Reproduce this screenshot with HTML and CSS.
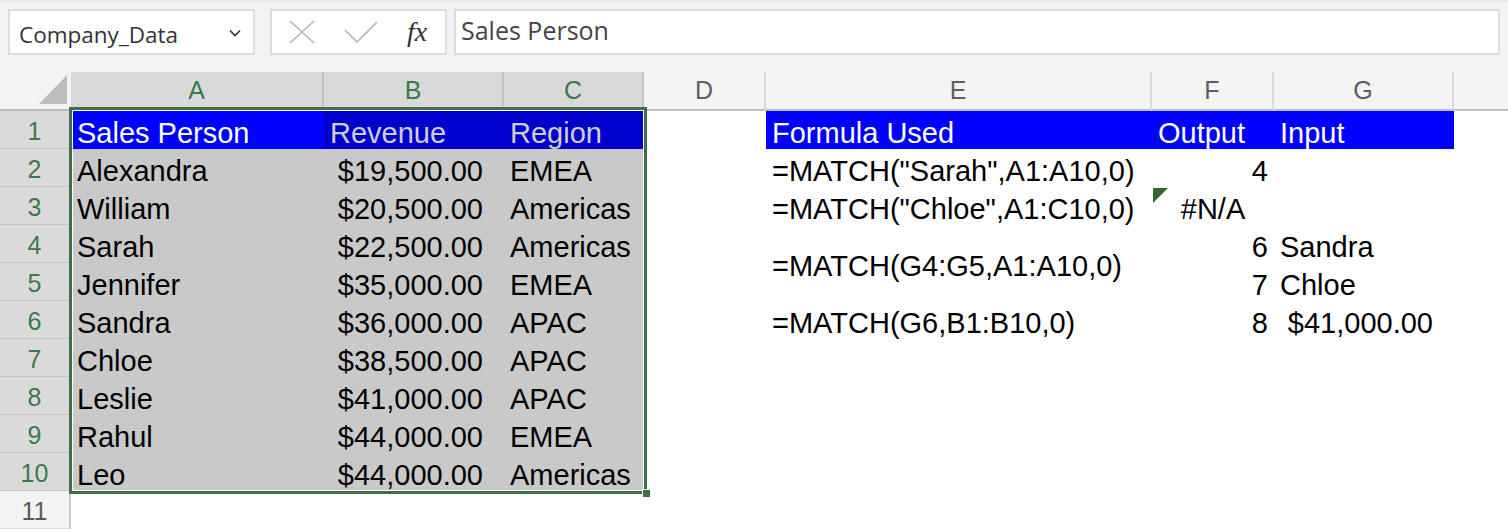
FILE: index.html
```html
<!DOCTYPE html>
<html lang="en">

<head>
    <meta charset="UTF-8">
    <title>Company_Data | MATCH examples</title>
    <link rel="stylesheet" href="styles.css">
</head>

<body>

    <!-- Name box + formula bar -->
    <div class="toolbar">
        <div class="name-box">
            <span>Company_Data</span>
            <svg class="chevron" width="12" height="8" viewBox="0 0 12 8">
                <polyline points="1,1.5 6,6.5 11,1.5" fill="none" stroke="#333" stroke-width="1.6" />
            </svg>
        </div>
        <div class="fx-buttons">
            <svg width="26" height="24" viewBox="0 0 26 24">
                <line x1="1" y1="1" x2="25" y2="23" stroke="#b4b4b4" stroke-width="1.6" />
                <line x1="25" y1="1" x2="1" y2="23" stroke="#b4b4b4" stroke-width="1.6" />
            </svg>
            <svg width="34" height="22" viewBox="0 0 34 22">
                <polyline points="1,9 13,21 33,1" fill="none" stroke="#b4b4b4" stroke-width="1.6" />
            </svg>
            <span class="fx">fx</span>
        </div>
        <div class="formula-input">Sales Person</div>
    </div>

    <!-- Sheet -->
    <div class="sheet">
        <div class="corner"><span class="corner-tri"></span></div>
        <div class="col-head sel">A</div>
        <div class="col-head sel">B</div>
        <div class="col-head sel">C</div>
        <div class="col-head">D</div>
        <div class="col-head">E</div>
        <div class="col-head">F</div>
        <div class="col-head">G</div>
        <div class="col-head last"></div>

        <!-- 1 -->
        <div class="row-head sel">1</div>
        <div class="cell hdr">Sales Person</div>
        <div class="cell hdr dim">Revenue</div>
        <div class="cell hdr dim">Region</div>
        <div class="cell"></div>
        <div class="cell hdr">Formula Used</div>
        <div class="cell hdr">Output</div>
        <div class="cell hdr">Input</div>
        <div class="cell"></div>

        <!-- 2 -->
        <div class="row-head sel">2</div>
        <div class="cell data">Alexandra</div>
        <div class="cell data num">$19,500.00</div>
        <div class="cell data">EMEA</div>
        <div class="cell"></div>
        <div class="cell">=MATCH("Sarah",A1:A10,0)</div>
        <div class="cell int">4</div>
        <div class="cell"></div>
        <div class="cell"></div>

        <!-- 3 -->
        <div class="row-head sel">3</div>
        <div class="cell data">William</div>
        <div class="cell data num">$20,500.00</div>
        <div class="cell data">Americas</div>
        <div class="cell"></div>
        <div class="cell">=MATCH("Chloe",A1:C10,0)</div>
        <div class="cell err">#N/A</div>
        <div class="cell"></div>
        <div class="cell"></div>

        <!-- 4 -->
        <div class="row-head sel">4</div>
        <div class="cell data">Sarah</div>
        <div class="cell data num">$22,500.00</div>
        <div class="cell data">Americas</div>
        <div class="cell"></div>
        <div class="cell merged">=MATCH(G4:G5,A1:A10,0)</div>
        <div class="cell int">6</div>
        <div class="cell">Sandra</div>
        <div class="cell"></div>

        <!-- 5 -->
        <div class="row-head sel">5</div>
        <div class="cell data">Jennifer</div>
        <div class="cell data num">$35,000.00</div>
        <div class="cell data">EMEA</div>
        <div class="cell"></div>
        <div class="cell int">7</div>
        <div class="cell">Chloe</div>
        <div class="cell"></div>

        <!-- 6 -->
        <div class="row-head sel">6</div>
        <div class="cell data">Sandra</div>
        <div class="cell data num">$36,000.00</div>
        <div class="cell data">APAC</div>
        <div class="cell"></div>
        <div class="cell">=MATCH(G6,B1:B10,0)</div>
        <div class="cell int">8</div>
        <div class="cell num">$41,000.00</div>
        <div class="cell"></div>

        <!-- 7 -->
        <div class="row-head sel">7</div>
        <div class="cell data">Chloe</div>
        <div class="cell data num">$38,500.00</div>
        <div class="cell data">APAC</div>
        <div class="cell"></div>
        <div class="cell"></div>
        <div class="cell"></div>
        <div class="cell"></div>
        <div class="cell"></div>

        <!-- 8 -->
        <div class="row-head sel">8</div>
        <div class="cell data">Leslie</div>
        <div class="cell data num">$41,000.00</div>
        <div class="cell data">APAC</div>
        <div class="cell"></div>
        <div class="cell"></div>
        <div class="cell"></div>
        <div class="cell"></div>
        <div class="cell"></div>

        <!-- 9 -->
        <div class="row-head sel">9</div>
        <div class="cell data">Rahul</div>
        <div class="cell data num">$44,000.00</div>
        <div class="cell data">EMEA</div>
        <div class="cell"></div>
        <div class="cell"></div>
        <div class="cell"></div>
        <div class="cell"></div>
        <div class="cell"></div>

        <!-- 10 -->
        <div class="row-head sel">10</div>
        <div class="cell data">Leo</div>
        <div class="cell data num">$44,000.00</div>
        <div class="cell data">Americas</div>
        <div class="cell"></div>
        <div class="cell"></div>
        <div class="cell"></div>
        <div class="cell"></div>
        <div class="cell"></div>

        <!-- 11 -->
        <div class="row-head">11</div>
        <div class="cell"></div>
        <div class="cell"></div>
        <div class="cell"></div>
        <div class="cell"></div>
        <div class="cell"></div>
        <div class="cell"></div>
        <div class="cell"></div>
        <div class="cell"></div>

        <!-- selected range A1:C10 -->
        <div class="selection"><span class="fill-handle"></span></div>
    </div>

</body>

</html>
```

FILE: styles.css
```css
* {
    margin: 0;
    padding: 0;
    box-sizing: border-box;
}

body {
    background-color: #fff;
    overflow: hidden;
    font-family: "Liberation Sans", Arial, sans-serif;
}

/* Toolbar */
.toolbar {
    display: flex;
    height: 72px;
    padding: 9px 8px 0 8px;
    background: #f3f3f3;
    box-shadow: inset 0 3px 3px -2px rgba(0, 0, 0, 0.08);
    font-family: "Open Sans", sans-serif;
}

.name-box,
.fx-buttons,
.formula-input {
    height: 46px;
    background: #fff;
    border: 2px solid #dedede;
    display: flex;
    align-items: center;
}

.name-box {
    width: 247px;
    padding: 5px 10px 0 9px;
    justify-content: space-between;
    font-size: 22.5px;
    color: #333;
}

.chevron {
    margin-right: 2px;
    margin-top: -3px;
}

.fx-buttons {
    width: 177px;
    margin-left: 15px;
    padding-left: 17px;
    gap: 29px;
}

.fx {
    font-family: "Liberation Serif", serif;
    font-style: italic;
    font-size: 28px;
    color: #333;
    margin-left: 0;
}

.formula-input {
    flex: 1;
    margin-left: 7px;
    padding: 0 0 5px 5px;
    font-size: 25px;
    color: #444;
}

/* Sheet grid */
.sheet {
    position: relative;
    display: grid;
    grid-template-columns: 71px 253px 180px 140px 122px 386px 122px 180px 1fr;
    grid-template-rows: 39px repeat(11, 38px);
}

.corner {
    position: relative;
    background: #f3f3f3;
    border-bottom: 2px solid #bdbdbd;
}

.corner-tri {
    position: absolute;
    right: 4px;
    bottom: 5px;
    width: 28px;
    height: 29px;
    background: #bdbdbd;
    clip-path: polygon(100% 0, 100% 100%, 0 100%);
}

.col-head {
    display: flex;
    align-items: center;
    justify-content: center;
    background: #f4f4f4;
    border-right: 2px solid #dddddd;
    border-bottom: 2px solid #bdbdbd;
    color: #5f5f5f;
    font-size: 25px;
}

.col-head.sel {
    background: #d9d9d9;
    border-right-color: #c4c4c4;
    color: #3a7a4a;
}

.col-head.last {
    border-right: none;
}

.row-head {
    display: flex;
    align-items: center;
    justify-content: center;
    padding-top: 4px;
    background: #f3f3f3;
    border-right: 2px solid #c8c8c8;
    border-bottom: 1px solid #dcdcdc;
    color: #5a5a5a;
    font-size: 25px;
}

.row-head.sel {
    background: #dadada;
    border-bottom-color: #c4c4c4;
    color: #3a7a4a;
}

/* Cells */
.cell {
    font-size: 29px;
    line-height: 38px;
    padding: 3px 6px 0 6px;
    white-space: nowrap;
    color: #000;
    background: #fff;
}

.hdr {
    background: #0000ff;
    color: #fff;
}

.hdr.dim {
    background: #0000cc;
    color: #cfcfcf;
}

.data {
    background: #c9c9c9;
}

.num {
    text-align: right;
    padding-right: 21px;
}

.int {
    text-align: right;
}

.err {
    position: relative;
    text-align: center;
}

.err::before {
    content: "";
    position: absolute;
    top: 1px;
    left: 1px;
    width: 15px;
    height: 15px;
    background: #2f6b2c;
    clip-path: polygon(0 0, 100% 0, 0 100%);
}

.merged {
    grid-row: span 2;
    display: flex;
    align-items: center;
    padding-top: 6px;
    line-height: 1;
}

/* Selection overlay */
.selection {
    position: absolute;
    grid-column: 2 / 5;
    grid-row: 2 / 12;
    top: -4px;
    left: -2px;
    right: -3px;
    bottom: -3px;
    border: 3px solid #3d7049;
    box-shadow: inset 0 0 0 1px #fff;
    pointer-events: none;
}

.fill-handle {
    position: absolute;
    right: -7px;
    bottom: -7px;
    width: 9px;
    height: 9px;
    background: #3d7049;
    border: 1px solid #fff;
}
```
